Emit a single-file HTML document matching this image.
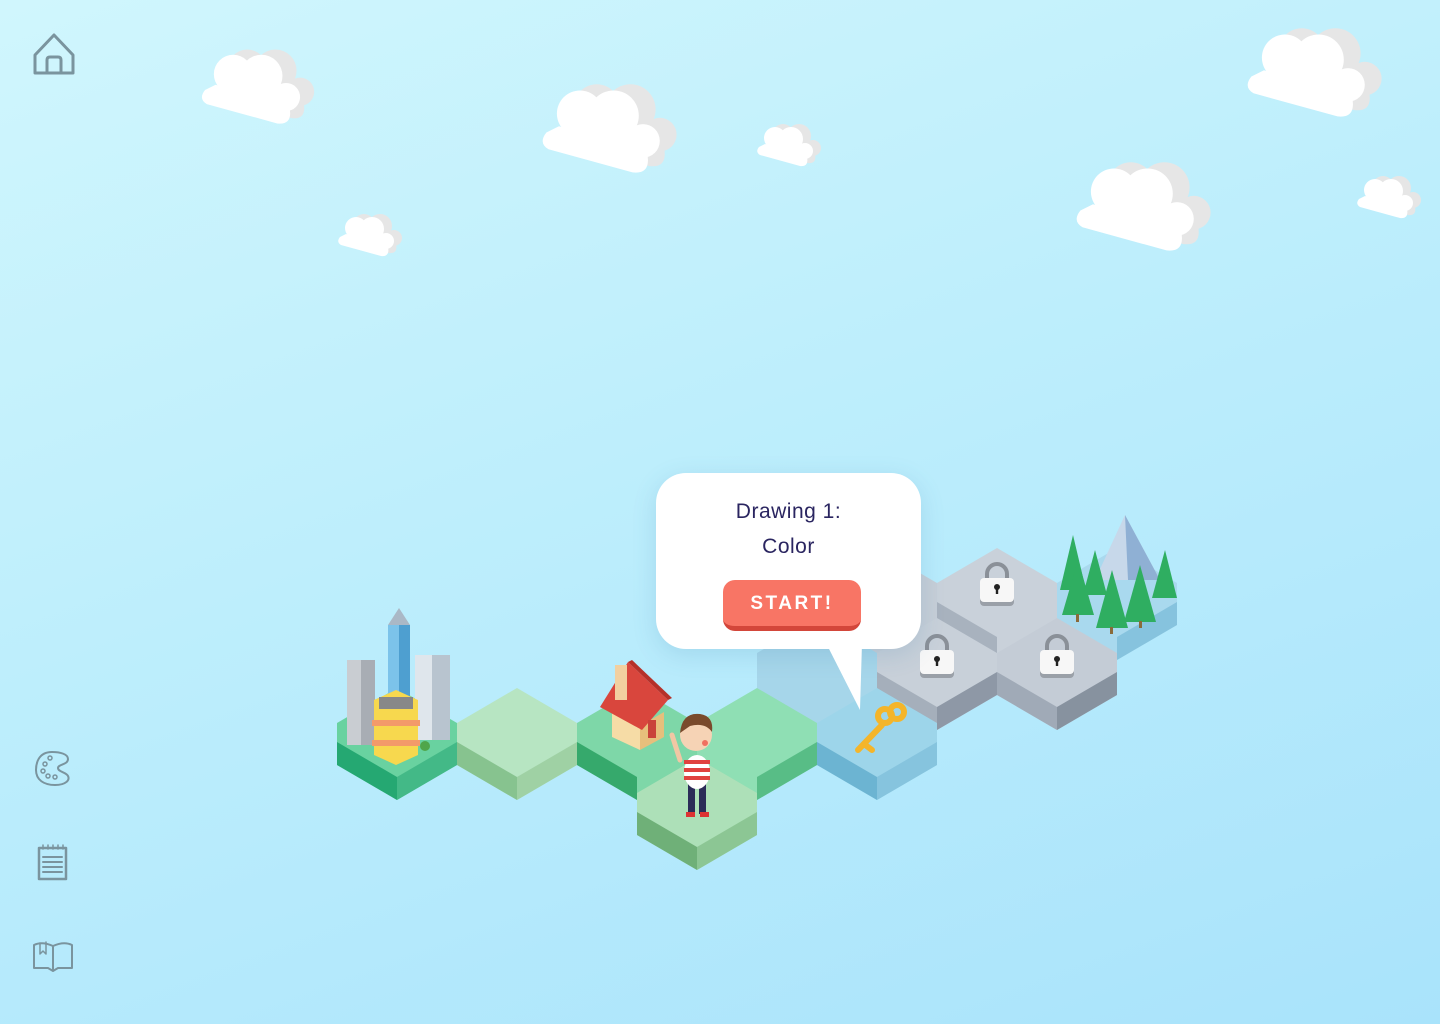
<!DOCTYPE html>
<html><head><meta charset="utf-8"><style>
html,body{margin:0;padding:0}
body{width:1440px;height:1024px;overflow:hidden;position:relative;background:linear-gradient(160deg,#d0f6fd 0%,#bdeefc 45%,#a9e3fb 100%);font-family:"Liberation Sans",sans-serif}
.bubble{position:absolute;left:656px;top:473px;width:265px;height:176px;background:#fff;border-radius:30px;box-shadow:0 6px 24px rgba(60,130,170,.18);text-align:center;color:#2a2560}
.t{position:absolute;left:0;right:0;font-size:21px;letter-spacing:.5px}
.btn{position:absolute;left:67px;top:107px;width:138px;height:46px;background:#f87565;border-radius:12px;border-bottom:5px solid #d3463a;color:#fff;font-size:19px;letter-spacing:2.5px;line-height:48px;font-weight:bold}
svg{position:absolute;left:0;top:0}
</style></head><body>
<svg width="1440" height="1024" viewBox="0 0 1440 1024">
<defs>
<g id="cloud">
  <g transform="translate(16,-6)" fill="#e6e6e6">
    <circle cx="40" cy="32" r="22"/><circle cx="72" cy="34" r="24"/><circle cx="100" cy="58" r="16"/>
    <path d="M8 50 Q0 60 10 66 L90 88 Q108 90 104 70 L20 44 Z"/>
  </g>
  <g fill="#fff">
    <circle cx="40" cy="32" r="22"/><circle cx="72" cy="34" r="24"/><circle cx="100" cy="58" r="16"/>
    <path d="M8 50 Q0 60 10 66 L90 88 Q108 90 104 70 L20 44 Z"/>
    <rect x="30" y="35" width="60" height="30"/>
  </g>
</g>
<g id="lock">
  <path d="M-10 2 V-8 A10 10 0 0 1 10 -8 V2" fill="none" stroke="#8a9098" stroke-width="4"/>
  <rect x="-17" y="-2" width="34" height="26" rx="4" fill="#9aa0a8"/>
  <rect x="-17" y="-4" width="34" height="24" rx="4" fill="#f7f7f7"/>
  <circle cx="0" cy="5" r="3" fill="#222"/><rect x="-1.2" y="5" width="2.4" height="7" fill="#222"/>
</g>
</defs>

<use href="#cloud" transform="translate(198,46) scale(0.88)"/>
<use href="#cloud" transform="translate(538,80) scale(1.05)"/>
<use href="#cloud" transform="translate(755,122) scale(0.5)"/>
<use href="#cloud" transform="translate(336,212) scale(0.5)"/>
<use href="#cloud" transform="translate(1072,158) scale(1.05)"/>
<use href="#cloud" transform="translate(1243,24) scale(1.05)"/>
<use href="#cloud" transform="translate(1355,174) scale(0.5)"/>

<g>
<polygon points="877,548 937,583 937,625 877,660 817,625 817,583" fill="#c6ced7"/>
<polygon points="997,548 1057,583 1057,625 997,660 937,625 937,583" fill="#c9d1da"/>
<polygon points="937,602 997,637 997,660 937,625" fill="#a8b2be"/>
<polygon points="1117,548 1177,583 1177,625 1117,660 1057,625 1057,583" fill="#a9d9ee"/>
<polygon points="1117,637 1177,602 1177,625 1117,660" fill="#86c3de"/>
<polygon points="817,618 877,653 877,695 817,730 757,695 757,653" fill="#a6d6ea"/>
<polygon points="937,618 997,653 997,695 937,730 877,695 877,653" fill="#c8d0d9"/>
<polygon points="877,672 937,707 937,730 877,695" fill="#a5afbb"/>
<polygon points="937,707 997,672 997,695 937,730" fill="#8e98a6"/>
<polygon points="1057,618 1117,653 1117,695 1057,730 997,695 997,653" fill="#c4ccd6"/>
<polygon points="997,672 1057,707 1057,730 997,695" fill="#a0aab7"/>
<polygon points="1057,707 1117,672 1117,695 1057,730" fill="#87929f"/>
<polygon points="397,688 457,723 457,765 397,800 337,765 337,723" fill="#69d2a0"/>
<polygon points="337,742 397,777 397,800 337,765" fill="#25a872"/>
<polygon points="397,777 457,742 457,765 397,800" fill="#43b987"/>
<polygon points="517,688 577,723 577,765 517,800 457,765 457,723" fill="#b7e5c2"/>
<polygon points="457,742 517,777 517,800 457,765" fill="#87c38f"/>
<polygon points="517,777 577,742 577,765 517,800" fill="#9fd1a4"/>
<polygon points="637,688 697,723 697,765 637,800 577,765 577,723" fill="#7ed7a8"/>
<polygon points="577,742 637,777 637,800 577,765" fill="#36a96c"/>
<polygon points="757,688 817,723 817,765 757,800 697,765 697,723" fill="#8fdfb4"/>
<polygon points="757,777 817,742 817,765 757,800" fill="#58bd86"/>
<polygon points="877,688 937,723 937,765 877,800 817,765 817,723" fill="#9dd5ea"/>
<polygon points="817,742 877,777 877,800 817,765" fill="#6cb4d2"/>
<polygon points="877,777 937,742 937,765 877,800" fill="#86c4de"/>
<polygon points="697,758 757,793 757,835 697,870 637,835 637,793" fill="#ade0b8"/>
<polygon points="637,812 697,847 697,870 637,835" fill="#6fb078"/>
<polygon points="697,847 757,812 757,835 697,870" fill="#8cc694"/>
</g>

<use href="#lock" transform="translate(997,582)"/>
<use href="#lock" transform="translate(937,654)"/>
<use href="#lock" transform="translate(1057,654)"/>

<g stroke="#f4b52a" stroke-width="6" fill="none" stroke-linecap="round">
<circle cx="885" cy="716" r="7"/><circle cx="897" cy="712" r="7"/>
<line x1="882" y1="725" x2="858" y2="750"/><line x1="864" y1="744" x2="872" y2="750"/>
</g>

<polygon points="1125,515 1160,580 1095,580" fill="#c7d8ea"/>
<polygon points="1125,515 1160,580 1128,580" fill="#8fb0d4"/>
<g fill="#2fae61">
<polygon points="1073,535 1086,590 1060,590"/><polygon points="1078,560 1094,615 1062,615"/>
<polygon points="1112,570 1128,628 1096,628"/><polygon points="1140,565 1156,622 1124,622"/>
<polygon points="1165,550 1177,598 1152,598"/><polygon points="1095,550 1107,595 1083,595"/>
</g>
<g fill="#8a6a3a"><rect x="1076" y="614" width="3" height="8"/><rect x="1110" y="627" width="3" height="7"/><rect x="1139" y="621" width="3" height="7"/></g>

<g>
<rect x="347" y="660" width="28" height="85" fill="#c9cdd2"/><rect x="361" y="660" width="14" height="85" fill="#a8adb4"/>
<rect x="388" y="625" width="22" height="110" fill="#7cc3ea"/><rect x="399" y="625" width="11" height="110" fill="#4e9fd0"/>
<polygon points="388,625 399,608 410,625" fill="#aab8c6"/>
<rect x="415" y="655" width="35" height="85" fill="#dfe6ec"/><rect x="432" y="655" width="18" height="85" fill="#b8c4cf"/>
<polygon points="374,700 396,690 418,700 418,755 396,765 374,755" fill="#f7d84e"/>
<rect x="379" y="697" width="34" height="12" fill="#888"/>
<rect x="372" y="720" width="48" height="6" fill="#f39a6a"/><rect x="372" y="740" width="48" height="6" fill="#f39a6a"/>
<circle cx="425" cy="746" r="5" fill="#4fa64a"/>
</g>

<g>
<polygon points="612,712 640,726 640,750 612,737" fill="#f6dca6"/>
<polygon points="640,726 664,712 664,737 640,750" fill="#e7bf7c"/>
<polygon points="600,707 628,662 668,700 642,730" fill="#d9463d"/>
<polygon points="628,662 668,700 672,698 632,660" fill="#b53029"/>
<rect x="615" y="665" width="12" height="35" fill="#f2d0a0"/>
<rect x="648" y="720" width="8" height="18" fill="#c9423a"/>
</g>

<g>
<rect x="688" y="784" width="7" height="30" fill="#2b2c58"/><rect x="699" y="784" width="7" height="30" fill="#2b2c58"/>
<ellipse cx="697" cy="772" rx="13" ry="17" fill="#fff"/>
<g fill="#e0423f"><rect x="684" y="760" width="26" height="4"/><rect x="684" y="768" width="26" height="4"/><rect x="684" y="776" width="26" height="4"/></g>
<path d="M680 760 L672 735" stroke="#f1c7a4" stroke-width="5" stroke-linecap="round"/>
<circle cx="696" cy="735" r="16" fill="#f6d3b5"/>
<path d="M680 733 Q682 712 700 714 Q714 716 712 732 Q705 722 690 726 Z" fill="#7a4a2c"/>
<circle cx="705" cy="743" r="3" fill="#f07060"/>
<rect x="686" y="812" width="9" height="5" fill="#d33"/><rect x="700" y="812" width="9" height="5" fill="#d33"/>
</g>

<g fill="none" stroke="#7a949e" stroke-width="3" stroke-linejoin="round" stroke-linecap="round">
<path d="M35 55 L54 35 L73 55 V73 H35 Z"/>
<path d="M47 73 V60 Q47 57 50 57 H58 Q61 57 61 60 V73"/>
<path d="M52 752 C38 752 36 764 36 770 C36 780 44 785 55 785 C66 785 70 780 68 776 C66 772 58 772 58 768 C58 764 68 765 68 759 C68 754 60 752 52 752 Z" stroke-width="2"/>
<circle cx="45" cy="764" r="2" stroke-width="1.5"/><circle cx="43" cy="771" r="2" stroke-width="1.5"/><circle cx="48" cy="776" r="2" stroke-width="1.5"/><circle cx="55" cy="777" r="2" stroke-width="1.5"/><circle cx="50" cy="758" r="2" stroke-width="1.5"/>
<rect x="39" y="848" width="27" height="31" stroke-width="2.5"/>
<path d="M43 857 H62 M43 862 H62 M43 867 H62 M43 872 H62" stroke-width="2"/>
<path d="M43 845 V849 M48 845 V849 M53 845 V849 M58 845 V849 M63 845 V849" stroke-width="1.5"/>
<path d="M34 945 V968 H48 L53 971 L58 968 H72 V945 Q64 941 53 946 Q42 941 34 945 Z M53 946 V970" stroke-width="2"/>
<path d="M40 943 V954 L43 951 L46 954 V942" stroke-width="1.5"/>
</g>
</svg>

<div class="bubble">
  <svg style="left:170px;top:170px;overflow:visible" width="40" height="70"><path d="M0 0 L34 67 L36 0 Z" fill="#fff"/></svg>
  <div class="t" style="top:27px">Drawing 1:</div>
  <div class="t" style="top:62px">Color</div>
  <div class="btn">START!</div>
</div>
</body></html>
